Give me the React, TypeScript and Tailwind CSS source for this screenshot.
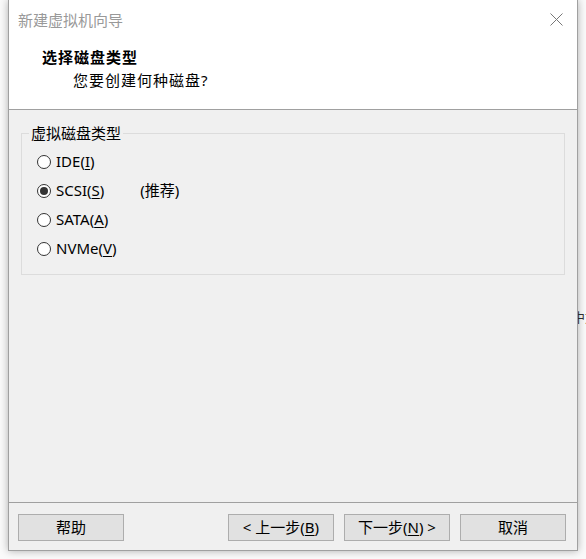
import React from "react";

const font = { fontFamily: '"Noto Sans", "Noto Sans CJK SC", sans-serif' };

function Radio({ label, u, after, checked, extra }: { label: string; u: string; after: string; checked?: boolean; extra?: string }) {
  return (
    <div className="flex items-center h-[29px]">
      <div className="shrink-0 w-[14px] h-[14px] rounded-full border border-[#333333] bg-white flex items-center justify-center">
        {checked && <div className="w-[8px] h-[8px] rounded-full bg-[#333333]" />}
      </div>
      <span className="ml-[5px] text-[15px] leading-none text-black">
        {label}(<span className="underline underline-offset-2">{u}</span>){after}
      </span>
      {extra && <span className="ml-[36px] text-[15px] leading-none text-black">{extra}</span>}
    </div>
  );
}

function Btn({ children, className = "" }: { children: React.ReactNode; className?: string }) {
  return (
    <div className={"h-[27px] w-[106px] border border-[#adadad] bg-[#e1e1e1] flex items-center justify-center text-[15px] text-black leading-none " + className}>
      {children}
    </div>
  );
}

export default function App() {
  return (
    <div className="relative w-[586px] h-[559px] bg-[#fafafa] overflow-hidden" style={font}>
      <span className="absolute left-[572px] top-[308px] text-[13px] text-[#333] whitespace-nowrap">中文</span>
      <div className="relative ml-[8px] w-[570px] h-[551px] border-x border-b border-[#a0a0a0] bg-[#f0f0f0] flex flex-col shadow-[0_0_8px_rgba(0,0,0,0.3)]">
        <div className="h-[110px] bg-white border-b border-[#a0a0a0] relative">
          <div className="absolute left-[9px] top-[10px] text-[15px] leading-[20px] text-[#999999]">新建虚拟机向导</div>
          <svg className="absolute left-[541px] top-[13px]" width="13" height="13" viewBox="0 0 13 13">
            <path d="M0.5 0.5 L12.5 12.5 M12.5 0.5 L0.5 12.5" stroke="#777" strokeWidth="1" fill="none" />
          </svg>
          <div className="absolute left-[33px] top-[47px] text-[15px] leading-[20px] font-bold text-black tracking-[1px]">选择磁盘类型</div>
          <div className="absolute left-[64px] top-[70px] text-[15px] leading-[20px] text-black tracking-[1px]">您要创建何种磁盘?</div>
        </div>
        <div className="flex-1 flex flex-col">
          <div className="relative ml-[12px] mt-[23px] w-[544px] h-[142px] border border-[#dcdcdc]">
            <span className="absolute left-[7px] top-[-11px] px-[2px] bg-[#f0f0f0] text-[15px] leading-[20px] text-black">虚拟磁盘类型</span>
            <div className="pl-[15px] pt-[13px] flex flex-col">
              <Radio label="IDE" u="I" after="" />
              <Radio label="SCSI" u="S" after="" checked extra="(推荐)" />
              <Radio label="SATA" u="A" after="" />
              <Radio label="NVMe" u="V" after="" />
            </div>
          </div>
          <div className="flex-1" />
          <div className="border-t border-[#a0a0a0] h-[48px] flex items-start pt-[11px] pl-[9px] pr-[11px]">
            <Btn>帮助</Btn>
            <div className="flex-1" />
            <Btn className="mr-[10px]">&lt; 上一步(<span className="underline underline-offset-2">B</span>)</Btn>
            <Btn className="mr-[10px]">下一步(<span className="underline underline-offset-2">N</span>) &gt;</Btn>
            <Btn>取消</Btn>
          </div>
        </div>
      </div>
    </div>
  );
}
